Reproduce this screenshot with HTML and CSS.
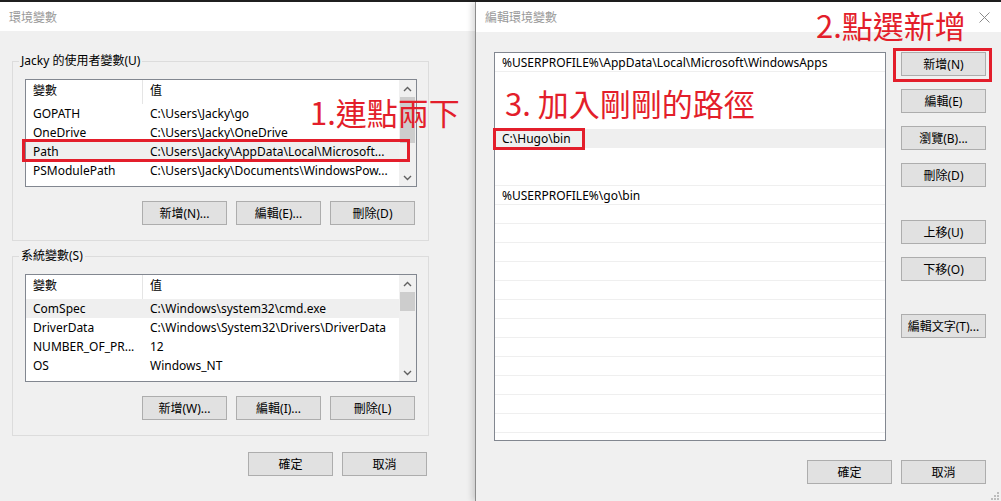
FILE: index.html
```html
<!DOCTYPE html>
<html lang="zh-Hant">
<head>
    <meta charset="UTF-8">
    <title>環境變數</title>
    <link rel="stylesheet" href="styles.css">
</head>
<body>
    <div class="topbar"></div>
    <div class="desk">
        <section class="win win-env">
            <div class="titlebar">環境變數</div>
            <div class="env-body">
                <fieldset class="group">
                    <legend>Jacky 的使用者變數(U)</legend>
                    <div class="listview">
                        <div class="lv-main">
                            <div class="lv-head"><span>變數</span><span>值</span></div>
                            <div class="lv-row"><span>GOPATH</span><span>C:\Users\Jacky\go</span></div>
                            <div class="lv-row"><span>OneDrive</span><span>C:\Users\Jacky\OneDrive</span></div>
                            <div class="lv-row sel"><span>Path</span><span>C:\Users\Jacky\AppData\Local\Microsoft...</span></div>
                            <div class="lv-row"><span>PSModulePath</span><span>C:\Users\Jacky\Documents\WindowsPow...</span></div>
                        </div>
                        <div class="scrollbar">
                            <div class="arrow"><svg width="9" height="6" viewBox="0 0 9 6"><polyline points="1,5 4.5,1.5 8,5"/></svg></div>
                            <div class="track"><div class="thumb thumb-user"></div></div>
                            <div class="arrow"><svg width="9" height="6" viewBox="0 0 9 6"><polyline points="1,1 4.5,4.5 8,1"/></svg></div>
                        </div>
                    </div>
                    <div class="btn-row">
                        <button class="btn">新增(N)...</button>
                        <button class="btn">編輯(E)...</button>
                        <button class="btn">刪除(D)</button>
                    </div>
                </fieldset>

                <fieldset class="group group-sys">
                    <legend>系統變數(S)</legend>
                    <div class="listview">
                        <div class="lv-main">
                            <div class="lv-head"><span>變數</span><span>值</span></div>
                            <div class="lv-row sel"><span>ComSpec</span><span>C:\Windows\system32\cmd.exe</span></div>
                            <div class="lv-row"><span>DriverData</span><span>C:\Windows\System32\Drivers\DriverData</span></div>
                            <div class="lv-row"><span>NUMBER_OF_PR...</span><span>12</span></div>
                            <div class="lv-row"><span>OS</span><span>Windows_NT</span></div>
                        </div>
                        <div class="scrollbar">
                            <div class="arrow"><svg width="9" height="6" viewBox="0 0 9 6"><polyline points="1,5 4.5,1.5 8,5"/></svg></div>
                            <div class="track"><div class="thumb thumb-sys"></div></div>
                            <div class="arrow"><svg width="9" height="6" viewBox="0 0 9 6"><polyline points="1,1 4.5,4.5 8,1"/></svg></div>
                        </div>
                    </div>
                    <div class="btn-row">
                        <button class="btn">新增(W)...</button>
                        <button class="btn">編輯(I)...</button>
                        <button class="btn">刪除(L)</button>
                    </div>
                </fieldset>

                <div class="dlg-foot env-foot">
                    <button class="btn">確定</button>
                    <button class="btn">取消</button>
                </div>
            </div>

            <div class="mark mark-path"></div>
            <div class="note note-1">1.連點兩下</div>
        </section>

        <section class="win win-edit">
            <div class="titlebar">
                <span>編輯環境變數</span>
                <svg class="close" width="11" height="11" viewBox="0 0 11 11"><path d="M0.5 0.5L10.5 10.5M10.5 0.5L0.5 10.5"/></svg>
            </div>
            <div class="edit-body">
                <div class="pathlist">
                    <div class="path-row">%USERPROFILE%\AppData\Local\Microsoft\WindowsApps</div>
                    <div class="path-row blank"></div>
                    <div class="path-row blank"></div>
                    <div class="path-row blank"></div>
                    <div class="path-row blank sel">C:\Hugo\bin</div>
                    <div class="path-row blank"></div>
                    <div class="path-row"></div>
                    <div class="path-row">%USERPROFILE%\go\bin</div>
                    <div class="path-row"></div>
                    <div class="path-row"></div>
                    <div class="path-row"></div>
                    <div class="path-row"></div>
                    <div class="path-row"></div>
                    <div class="path-row"></div>
                    <div class="path-row"></div>
                    <div class="path-row"></div>
                    <div class="path-row"></div>
                    <div class="path-row"></div>
                    <div class="path-row"></div>
                    <div class="path-row"></div>
                    <div class="path-row"></div>
                </div>
                <div class="side">
                    <button class="btn">新增(N)</button>
                    <button class="btn">編輯(E)</button>
                    <button class="btn">瀏覽(B)...</button>
                    <button class="btn">刪除(D)</button>
                    <button class="btn gap-big">上移(U)</button>
                    <button class="btn">下移(O)</button>
                    <button class="btn gap-big">編輯文字(T)...</button>
                </div>
            </div>
            <div class="dlg-foot edit-foot">
                <button class="btn">確定</button>
                <button class="btn">取消</button>
            </div>

            <svg class="grip" width="9" height="9" viewBox="0 0 9 9">
                <rect x="7" y="1" width="2" height="2"/>
                <rect x="4" y="4" width="2" height="2"/>
                <rect x="7" y="4" width="2" height="2"/>
                <rect x="1" y="7" width="2" height="2"/>
                <rect x="4" y="7" width="2" height="2"/>
                <rect x="7" y="7" width="2" height="2"/>
            </svg>

            <div class="mark mark-new"></div>
            <div class="mark mark-hugo"></div>
            <div class="note note-2">2.點選新增</div>
            <div class="note note-3">3. 加入剛剛的路徑</div>
        </section>
    </div>
</body>
</html>
```

FILE: styles.css
```css
* {
    box-sizing: border-box;
}
body {
    margin: 0;
    width: 1001px;
    height: 501px;
    overflow: hidden;
    background-color: #f0f0f0;
    font-family: "Noto Sans", "Noto Sans CJK TC", sans-serif;
    font-size: 12px;
    color: #000;
}
.topbar {
    height: 2px;
    background-color: #1f1f1f;
}
.desk {
    display: flex;
    height: 499px;
}
.win {
    position: relative;
    background-color: #f0f0f0;
}
.win-env {
    width: 475px;
}
.win-edit {
    flex: 1;
    border-left: 1px solid #8c8c8c;
    box-shadow: -3px 0 6px rgba(0, 0, 0, 0.15);
}
.titlebar {
    display: flex;
    align-items: center;
    justify-content: space-between;
    height: 29px;
    padding: 0 11px 0 9px;
    background-color: #fff;
    color: #999;
}
.win-edit .titlebar {
    height: 30px;
}
.close {
    stroke: #8a8a8a;
    stroke-width: 1;
    fill: none;
}

/* left dialog */
.env-body {
    padding-left: 12px;
}
.group {
    width: 417px;
    min-width: 0;
    margin: 22px 0 0;
    padding: 10px 11px 15px 6px;
    border: 1px solid #dcdcdc;
}
.group-sys {
    margin-top: 7px;
}
.group legend {
    padding: 0 2px;
    line-height: 16px;
}
.listview {
    display: flex;
    height: 108px;
    margin-left: 6px;
    border: 1px solid #828790;
    background-color: #fff;
    overflow: hidden;
}
.lv-main {
    flex: 1;
    overflow: hidden;
}
.lv-head,
.lv-row {
    display: grid;
    grid-template-columns: 117px 1fr;
    white-space: nowrap;
}
.lv-head {
    height: 24px;
    line-height: 22px;
}
.lv-head span:first-child {
    border-right: 1px solid #e5e5e5;
}
.lv-row {
    height: 19px;
    line-height: 19px;
}
.lv-head span,
.lv-row span {
    padding-left: 7px;
    overflow: hidden;
}
.lv-row.sel {
    background-color: #efefef;
}
.scrollbar {
    display: flex;
    flex-direction: column;
    width: 17px;
    background-color: #f0f0f0;
}
.arrow {
    display: flex;
    align-items: center;
    justify-content: center;
    height: 17px;
}
.arrow svg {
    fill: none;
    stroke: #606060;
    stroke-width: 1.4;
}
.track {
    flex: 1;
}
.thumb {
    margin: 0 1px;
    background-color: #cdcdcd;
}
.thumb-user {
    height: 46px;
}
.thumb-sys {
    height: 19px;
}
.btn-row {
    display: flex;
    justify-content: flex-end;
    gap: 9px;
    margin-top: 14px;
    padding-right: 2px;
}
.btn {
    width: 85px;
    height: 24px;
    padding: 0;
    border: 1px solid #adadad;
    background-color: #e1e1e1;
    font: inherit;
    color: #000;
}
.dlg-foot {
    display: flex;
    justify-content: flex-end;
    gap: 9px;
}
.env-foot {
    width: 417px;
    margin-top: 16px;
    padding-right: 2px;
}

/* right dialog */
.edit-body {
    display: flex;
    padding: 20px 15px 0 18px;
}
.pathlist {
    width: 392px;
    height: 389px;
    border: 1px solid #828790;
    background-color: #fff;
    overflow: hidden;
}
.path-row {
    height: 19px;
    line-height: 18px;
    padding: 1px 0 0 7px;
    border-bottom: 1px solid #efefef;
    white-space: nowrap;
}
.path-row.blank {
    border-bottom-color: transparent;
}
.path-row.sel {
    background-color: #efefef;
}
.side {
    display: flex;
    flex-direction: column;
    gap: 13px;
    margin-left: 15px;
}
.side .gap-big {
    margin-top: 20px;
}
.edit-foot {
    margin-top: 19px;
    padding-right: 15px;
}
.grip {
    position: absolute;
    right: 2px;
    bottom: 1px;
    fill: #bcbcbc;
}

/* annotations drawn over the screenshot */
.mark {
    position: absolute;
    border: 3px solid #e31e2b;
}
.mark-path {
    left: 22px;
    top: 137px;
    width: 388px;
    height: 23px;
}
.mark-new {
    left: 417px;
    top: 46px;
    width: 99px;
    height: 34px;
}
.mark-hugo {
    left: 17px;
    top: 126px;
    width: 92px;
    height: 22px;
}
.note {
    position: absolute;
    font-family: "Noto Sans CJK TC", sans-serif;
    font-size: 31px;
    line-height: 31px;
    color: #e31e2b;
    white-space: nowrap;
}
.note-1 {
    left: 310px;
    top: 94px;
}
.note-2 {
    left: 340px;
    top: 7px;
}
.note-3 {
    left: 29px;
    top: 85px;
}
```
